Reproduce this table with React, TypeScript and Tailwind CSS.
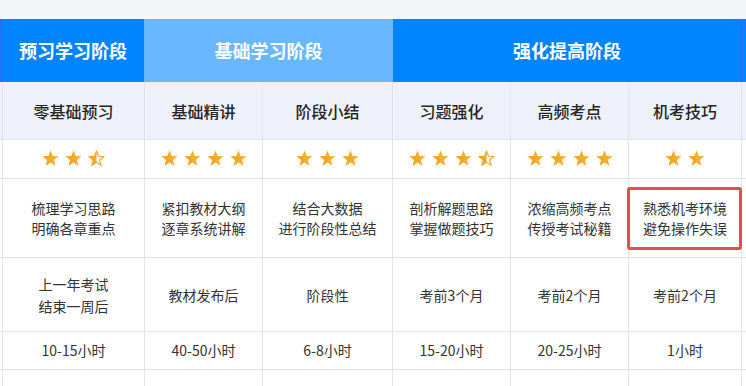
import React from "react";

const font = { fontFamily: '"Noto Sans CJK SC", "Noto Sans", sans-serif' };

function Star({ half = false }: { half?: boolean }) {
  const d =
    "M8.5 0.5 L10.62 6.09 L16.58 6.37 L11.92 10.11 L13.5 15.88 L8.5 12.6 L3.5 15.88 L5.08 10.11 L0.42 6.37 L6.38 6.09 Z";
  const id = half ? "sgh" : "sg";
  return (
    <svg width="17" height="17" viewBox="0 0 17 17">
      <defs>
        <linearGradient id={id} x1="0" y1="0" x2="1" y2="0">
          <stop offset="0" stopColor="#f39f1d" />
          <stop offset="1" stopColor="#f6b53d" />
        </linearGradient>
        <clipPath id="lefthalf">
          <rect x="0" y="0" width="8.5" height="17" />
        </clipPath>
      </defs>
      {half ? (
        <>
          <path d={d} fill="none" stroke="#f5a623" strokeWidth="1.2" strokeLinejoin="round" transform="translate(0.6 0.6) scale(0.93)" />
          <path d={d} fill={`url(#${id})`} clipPath="url(#lefthalf)" />
        </>
      ) : (
        <path d={d} fill={`url(#${id})`} />
      )}
    </svg>
  );
}

function Stars({ full, half = false }: { full: number; half?: boolean }) {
  return (
    <div className="flex items-center gap-[6px]">
      {Array.from({ length: full }).map((_, i) => (
        <Star key={i} />
      ))}
      {half && <Star half />}
    </div>
  );
}

const cell =
  "border-r border-b border-[#e4e4e4] flex items-center justify-center text-center";

export default function App() {
  const subs = ["零基础预习", "基础精讲", "阶段小结", "习题强化", "高频考点", "机考技巧"];
  const stars: [number, boolean][] = [
    [2, true],
    [4, false],
    [3, false],
    [3, true],
    [4, false],
    [2, false],
  ];
  const descs = [
    ["梳理学习思路", "明确各章重点"],
    ["紧扣教材大纲", "逐章系统讲解"],
    ["结合大数据", "进行阶段性总结"],
    ["剖析解题思路", "掌握做题技巧"],
    ["浓缩高频考点", "传授考试秘籍"],
    ["熟悉机考环境", "避免操作失误"],
  ];
  const times = [
    ["上一年考试", "结束一周后"],
    ["教材发布后"],
    ["阶段性"],
    ["考前3个月"],
    ["考前2个月"],
    ["考前2个月"],
  ];
  const hours = ["10-15小时", "40-50小时", "6-8小时", "15-20小时", "20-25小时", "1小时"];

  const grid =
    "grid grid-cols-[3px_142px_118px_130px_118px_118px_113px_104px]";

  return (
    <div className="w-[746px] h-[386px] overflow-hidden bg-[#f3f5f9]" style={font}>
      <div className="h-[19px]" />
      {/* header */}
      <div className="flex h-[63px] text-white font-bold text-[18px]">
        <div className="w-[2px] bg-[#2a6ff2]" />
        <div className="w-[142px] bg-[#0084ff] flex items-center justify-center">预习学习阶段</div>
        <div className="w-[249px] bg-[#69b7ff] flex items-center justify-center">基础学习阶段</div>
        <div className="w-[348px] bg-[#0084ff] flex items-center justify-center">强化提高阶段</div>
        <div className="w-[2px] bg-[#2a6ff2]" />
        <div className="flex-1 bg-[#0084ff]" />
      </div>
      {/* sub header */}
      <div className={`${grid} h-[58px] bg-[#eef1f9]`}>
        <div className="border-r border-b border-[#e0e3ea]" />
        {subs.map((s) => (
          <div
            key={s}
            className="border-r border-b border-[#e0e3ea] flex items-center justify-center text-[16px] font-medium text-[#262626]"
          >
            {s}
          </div>
        ))}
        <div className="border-b border-[#e0e3ea]" />
      </div>
      <div className="bg-white">
        {/* stars */}
        <div className={`${grid} h-[39px]`}>
          <div className={cell} />
          {stars.map(([f, h], i) => (
            <div key={i} className={`${cell} pb-[2px]`}>
              <Stars full={f} half={h} />
            </div>
          ))}
          <div className={cell} />
        </div>
        {/* desc */}
        <div className={`${grid} h-[79px] text-[14px] leading-[20px] text-[#333]`}>
          <div className={cell} />
          {descs.map((d, i) => (
            <div key={i} className={`${cell} relative`}>
              <div>
                {d.map((l) => (
                  <div key={l}>{l}</div>
                ))}
              </div>
              {i === 5 && (
                <div className="absolute left-[-2px] top-[8px] w-[115px] h-[63px] border-[3px] border-[#ea4b4b] rounded-[3px]" />
              )}
            </div>
          ))}
          <div className={cell} />
        </div>
        {/* time */}
        <div className={`${grid} h-[74px] text-[14px] leading-[22px] text-[#333]`}>
          <div className={cell} />
          {times.map((d, i) => (
            <div key={i} className={cell}>
              <div>
                {d.map((l) => (
                  <div key={l}>{l}</div>
                ))}
              </div>
            </div>
          ))}
          <div className={cell} />
        </div>
        {/* hours */}
        <div className={`${grid} h-[38px] text-[14px] text-[#333]`}>
          <div className={cell} />
          {hours.map((h) => (
            <div key={h} className={cell}>
              {h}
            </div>
          ))}
          <div className={cell} />
        </div>
        {/* next row */}
        <div className={`${grid} h-[40px]`}>
          <div className={cell} />
          {hours.map((h) => (
            <div key={h} className={cell} />
          ))}
          <div className={cell} />
        </div>
      </div>
    </div>
  );
}
